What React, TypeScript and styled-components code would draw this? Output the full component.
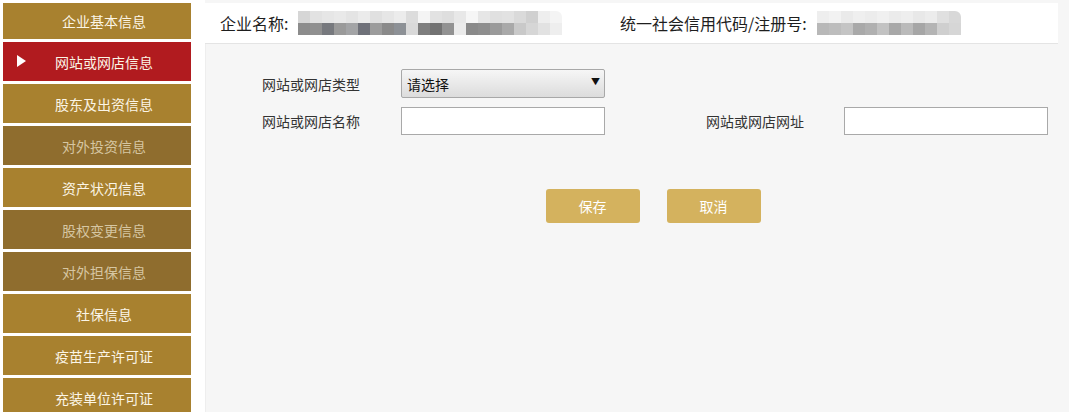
import React from 'react';
import styled, { createGlobalStyle } from 'styled-components';

const GlobalStyle = createGlobalStyle`
  html, body {
    margin: 0;
    padding: 0;
    background: #ffffff;
    font-family: "Noto Sans CJK SC", "Noto Sans", "Liberation Sans", sans-serif;
  }
`;

const Page = styled.div`
  display: flex;
  width: 1069px;
  height: 412px;
  overflow: hidden;
`;

const Sidebar = styled.nav`
  display: flex;
  flex-direction: column;
  gap: 3px;
  width: 188px;
  margin-left: 3px;
  flex-shrink: 0;
`;

const NavItem = styled.div<{ $state: 'normal' | 'active' | 'disabled' }>`
  position: relative;
  display: flex;
  align-items: center;
  justify-content: center;
  height: 39px;
  flex-shrink: 0;
  padding-left: 14px;
  font-size: 14px;
  background: ${(p) =>
    p.$state === 'active' ? '#b11b1f' : p.$state === 'disabled' ? '#8f6d2e' : '#a8812f'};
  color: ${(p) => (p.$state === 'disabled' ? '#d6c6a2' : '#fbf5e6')};

  &:first-child {
    height: 36px;
    margin-top: 3px;
  }
`;

const Arrow = styled.span`
  position: absolute;
  left: 14px;
  top: 13px;
  width: 0;
  height: 0;
  border-top: 6px solid transparent;
  border-bottom: 6px solid transparent;
  border-left: 9px solid #ffffff;
`;

const Main = styled.main`
  display: flex;
  flex-direction: column;
  flex: 1;
  margin-left: 14px;
  background: #f6f6f6;
`;

const Header = styled.header`
  display: flex;
  align-items: center;
  height: 40px;
  margin-top: 3px;
  margin-right: 11px;
  padding-left: 15px;
  background: #ffffff;
  border-bottom: 1px solid #e4e4e4;
  font-size: 16px;
  color: #1e1e1e;
`;

const HeaderField = styled.div<{ $width: number }>`
  display: flex;
  align-items: center;
  width: ${(p) => p.$width}px;
`;

const Mosaic = styled.div`
  display: flex;
  flex-direction: column;
  margin-left: 10px;
  border-radius: 0 6px 0 0;
  overflow: hidden;
`;

const MosaicRow = styled.div`
  display: flex;
  height: 12px;
`;

const MosaicCell = styled.span<{ $c: string }>`
  width: 12px;
  height: 12px;
  background: ${(p) => p.$c};
`;

const Panel = styled.section`
  flex: 1;
  padding: 25px 0 0 56px;
  border-left: 1px solid #eeeeee;
`;

const FormGrid = styled.div`
  display: grid;
  grid-template-columns: 139px 204px 101px 138px 204px;
  grid-auto-rows: 29px;
  row-gap: 8px;
  align-items: center;
  width: 786px;
`;

const Label = styled.label`
  font-size: 14px;
  color: #333333;
`;

const SelectWrap = styled.div`
  position: relative;
  height: 29px;

  &::after {
    content: '▼';
    position: absolute;
    right: 5px;
    top: 6px;
    font-size: 9px;
    color: #111111;
    pointer-events: none;
  }
`;

const Select = styled.select`
  appearance: none;
  width: 100%;
  height: 29px;
  padding: 0 20px 0 5px;
  border: 1px solid #a8a8a8;
  border-radius: 2px;
  background: linear-gradient(#f6f6f6, #dcdcdc);
  font-family: inherit;
  font-size: 14px;
  color: #111111;
  box-sizing: border-box;
`;

const TextInput = styled.input`
  width: 204px;
  height: 28px;
  border: 1px solid #a9a9a9;
  background: #ffffff;
  box-sizing: border-box;
`;

const Actions = styled.div`
  display: flex;
  justify-content: center;
  gap: 27px;
  width: 782px;
  margin-top: 54px;
`;

const Button = styled.button`
  width: 94px;
  height: 34px;
  border: none;
  border-radius: 3px;
  background: #d4b25e;
  color: #ffffff;
  font-family: inherit;
  font-size: 14px;
`;

const navItems: { label: string; state: 'normal' | 'active' | 'disabled' }[] = [
  { label: '企业基本信息', state: 'normal' },
  { label: '网站或网店信息', state: 'active' },
  { label: '股东及出资信息', state: 'normal' },
  { label: '对外投资信息', state: 'disabled' },
  { label: '资产状况信息', state: 'normal' },
  { label: '股权变更信息', state: 'disabled' },
  { label: '对外担保信息', state: 'disabled' },
  { label: '社保信息', state: 'normal' },
  { label: '疫苗生产许可证', state: 'normal' },
  { label: '充装单位许可证', state: 'normal' },
];

const nameTop = [
  '#d6d6d6', '#e2e2e2', '#e6e6e6', '#e9e9e9', '#e4e4e4', '#ebebeb', '#e0e0e0', '#e6e6e6',
  '#ececec', '#dcdcdc', '#f4f4f4', '#e2e2e2', '#dedede', '#e8e8e8', '#f6f6f6', '#e6e6e6',
  '#e0e0e0', '#e2e2e2', '#dadada', '#d0d0d0', '#eeeeee', '#f4f4f4',
];
const nameBottom = [
  '#8c8c8c', '#909090', '#77797e', '#9a9a9a', '#a3a4a6', '#6f7179', '#9c9c9c', '#8a8a8a',
  '#8d9196', '#d9d9d9', '#7e7e7e', '#727272', '#929292', '#ebebeb', '#8a8a8a', '#8e8e8e',
  '#9a9a9a', '#a9a9a9', '#c9c9c9', '#d6d6d6', '#e2e2e2', '#eeeeee',
];
const codeTop = [
  '#eeeeee', '#f2f2f2', '#eaeaea', '#efefef', '#ececec', '#f0f0f0', '#ebebeb', '#eeeeee',
  '#e8e8e8', '#ececec', '#e0e0e0', '#d8d8d8',
];
const codeBottom = [
  '#b8b8b8', '#bdbdbd', '#c4c4c4', '#a9a9a9', '#b0b0b0', '#c2c2c2', '#a8a8a8', '#bababa',
  '#a6a6a6', '#b4b4b4', '#cfcfcf', '#d6d6d6',
];

const Redacted: React.FC<{ top: string[]; bottom: string[] }> = ({ top, bottom }) => (
  <Mosaic>
    <MosaicRow>
      {top.map((c, i) => (
        <MosaicCell key={i} $c={c} />
      ))}
    </MosaicRow>
    <MosaicRow>
      {bottom.map((c, i) => (
        <MosaicCell key={i} $c={c} />
      ))}
    </MosaicRow>
  </Mosaic>
);

export default function App() {
  return (
    <>
      <GlobalStyle />
      <Page>
        <Sidebar>
          {navItems.map((item) => (
            <NavItem key={item.label} $state={item.state}>
              {item.state === 'active' && <Arrow />}
              {item.label}
            </NavItem>
          ))}
        </Sidebar>
        <Main>
          <Header>
            <HeaderField $width={400}>
              企业名称:
              <Redacted top={nameTop} bottom={nameBottom} />
            </HeaderField>
            <HeaderField $width={380}>
              统一社会信用代码/注册号:
              <Redacted top={codeTop} bottom={codeBottom} />
            </HeaderField>
          </Header>
          <Panel>
            <FormGrid>
              <Label>网站或网店类型</Label>
              <SelectWrap>
                <Select defaultValue="">
                  <option value="">请选择</option>
                </Select>
              </SelectWrap>
              <span />
              <span />
              <span />
              <Label>网站或网店名称</Label>
              <TextInput />
              <span />
              <Label>网站或网店网址</Label>
              <TextInput />
            </FormGrid>
            <Actions>
              <Button>保存</Button>
              <Button>取消</Button>
            </Actions>
          </Panel>
        </Main>
      </Page>
    </>
  );
}
